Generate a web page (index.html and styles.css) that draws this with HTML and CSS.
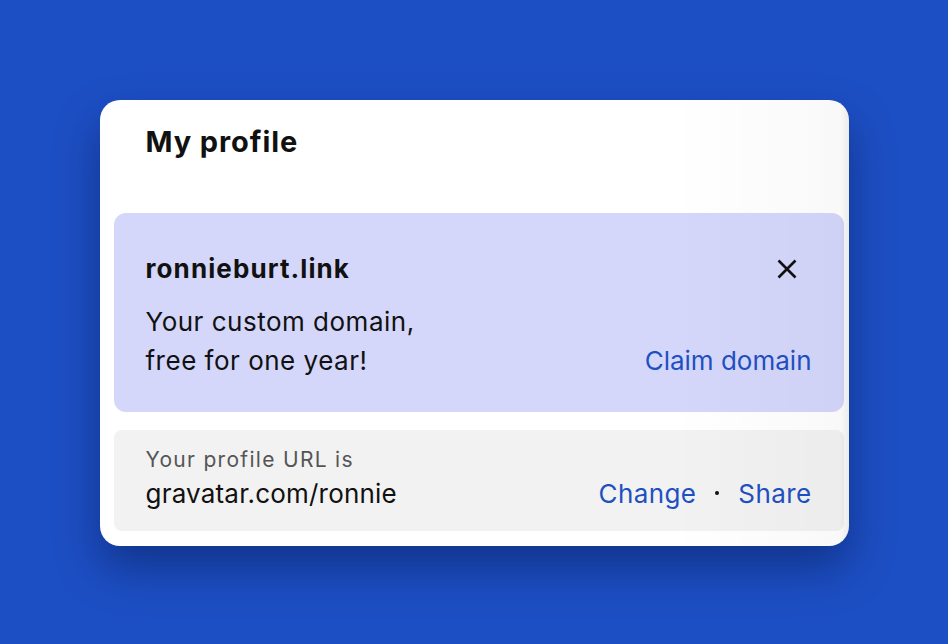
FILE: index.html
```html
<!DOCTYPE html>
<html lang="en">
<head>
    <meta charset="UTF-8">
    <meta name="viewport" content="width=device-width, initial-scale=1.0">
    <title>My profile</title>
    <link rel="stylesheet" href="styles.css">
</head>
<body>
    <div class="profile-card">
        <h1>My profile</h1>

        <div class="promo">
            <div class="promo-head">
                <span class="promo-domain">ronnieburt.link</span>
                <button class="promo-close" aria-label="Close">
                    <svg width="20" height="20" viewBox="0 0 20 20">
                        <path d="M1.5 1.5 L18.5 18.5 M18.5 1.5 L1.5 18.5" stroke="#111" stroke-width="2.6" fill="none"/>
                    </svg>
                </button>
            </div>
            <div class="promo-body">
                <p>Your custom domain,<br>free for one year!</p>
                <a href="#" class="link">Claim domain</a>
            </div>
        </div>

        <div class="url-box">
            <div>
                <div class="url-label">Your profile URL is</div>
                <div class="url-value">gravatar.com/ronnie</div>
            </div>
            <div class="url-actions">
                <a href="#" class="link">Change</a>
                <span class="dot"></span>
                <a href="#" class="link">Share</a>
            </div>
        </div>
    </div>
</body>
</html>
```

FILE: styles.css
```css
body {
    font-family: Inter, "Noto Sans", Arial, sans-serif;
    background: #1d4fc4;
    display: flex;
    justify-content: center;
    align-items: center;
    height: 100vh;
    margin: 0;
}
.profile-card {
    position: relative;
    background: #fff;
    border-radius: 20px;
    width: 749px;
    padding: 0 5px 15px 14px;
    box-sizing: border-box;
    box-shadow: 0 22px 45px rgba(5, 20, 70, 0.45);
    overflow: hidden;
    margin-top: 1px;
}
/* soft fade on the right edge of the card */
.profile-card::after {
    content: "";
    position: absolute;
    top: 0;
    right: 0;
    bottom: 0;
    width: 180px;
    background: linear-gradient(to right, rgba(0, 0, 0, 0), rgba(0, 0, 0, 0.025) 95%, rgba(0, 0, 0, 0.08));
    pointer-events: none;
}
.profile-card h1 {
    margin: 0;
    padding: 24px 0 53px 32px;
    font-size: 29px;
    line-height: 36px;
    font-weight: 700;
    letter-spacing: 0.9px;
    color: #111;
}
.promo {
    background: #d4d7fa;
    border-radius: 12px;
    padding: 40px 32px 32px 32px;
}
.promo-head {
    display: flex;
    justify-content: space-between;
    align-items: center;
}
.promo-domain {
    font-size: 26px;
    line-height: 32px;
    font-weight: 700;
    letter-spacing: 1.1px;
    color: #111;
}
.promo-close {
    background: none;
    border: none;
    padding: 0;
    margin-right: 15px;
    width: 20px;
    height: 20px;
    cursor: pointer;
}
.promo-body {
    display: flex;
    justify-content: space-between;
    align-items: flex-end;
    margin-top: 17px;
}
.promo-body p {
    margin: 0;
    font-size: 26px;
    line-height: 39px;
    letter-spacing: 0.5px;
    color: #111;
}
.link {
    font-size: 26px;
    line-height: 39px;
    color: #1f50c2;
    text-decoration: none;
}
.url-box {
    margin-top: 18px;
    background: #f2f2f2;
    border-radius: 8px;
    padding: 15px 32px 19px 32px;
    display: flex;
    justify-content: space-between;
    align-items: flex-end;
}
.url-label {
    font-size: 21px;
    line-height: 30px;
    letter-spacing: 1.3px;
    color: #555;
}
.url-value {
    font-size: 26px;
    line-height: 37px;
    letter-spacing: 0.2px;
    color: #111;
}
.url-actions {
    display: flex;
    align-items: center;
    gap: 19px;
}
.url-actions .link {
    line-height: 37px;
    letter-spacing: 0.4px;
}
.dot {
    width: 4px;
    height: 4px;
    border-radius: 50%;
    background: #111;
}
```
